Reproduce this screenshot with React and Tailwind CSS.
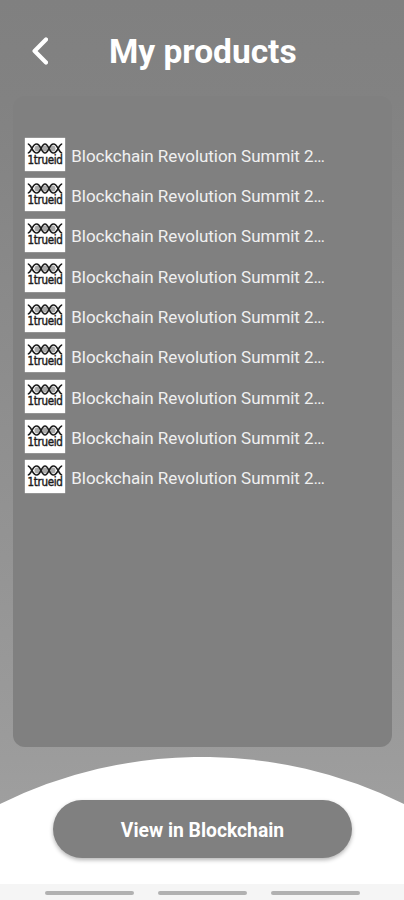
const products = Array.from({ length: 9 }, (_, i) => ({
  id: i + 1,
  title: "Blockchain Revolution Summit 2",
}));

function BackIcon() {
  return (
    <svg className="block h-7 w-4" viewBox="0 0 16 28" fill="none">
      <path
        d="M14 2.500L2.600 14L14 25.500"
        stroke="white"
        strokeWidth="4.2"
        strokeLinecap="round"
        strokeLinejoin="round"
      />
    </svg>
  );
}

function ProductLogo() {
  return (
    <div className="flex h-[33px] w-[39.5px] shrink-0 flex-col items-center bg-white pt-[4.500px] shadow-[0_0_1px_#fff]">
      <svg className="block h-[11px] w-9" viewBox="0 0 36 11" fill="none">
        <g fill="#aaa">
          <circle cx="10.5" cy="5.5" r="3" />
          <circle cx="18" cy="5.5" r="3" />
          <circle cx="25.5" cy="5.5" r="3" />
        </g>
        <g stroke="#1c1c1c" strokeWidth="1.7">
          <path d="M.8 1C4.500 1 5 10 9.600 10S14 1 18 1s3.800 9 8.400 9S31.500 1 35.200 1" />
          <path d="M.8 10C4.500 10 5 1 9.600 1S14 10 18 10s3.800-9 8.400-9S31.500 10 35.200 10" />
        </g>
      </svg>
      <span className="font-['DejaVu_Sans_Condensed','DejaVu_Sans',sans-serif] text-[11.500px] leading-[13px] tracking-[-0.300px] whitespace-nowrap text-[#1c1c1c] [-webkit-text-stroke:0.400px_#1c1c1c]">
        1trueid
      </span>
    </div>
  );
}

function ProductRow({ title }) {
  return (
    <li className="flex items-center gap-[6.500px]">
      <ProductLogo />
      <span className="pt-[2.500px] text-[17px] leading-[30px] tracking-[-0.040px] whitespace-nowrap text-[#f0f0f0]">
        {title}
        <span className="tracking-[-1px]">…</span>
      </span>
    </li>
  );
}

export default function App() {
  return (
    <div className="flex h-[900px] w-[404px] flex-col overflow-hidden bg-[linear-gradient(to_bottom,#808080_0px,#828282_100px,#9c9c9c_760px,#9f9f9f_810px)] font-['Roboto',sans-serif]">
      <header className="flex h-[96px] items-center gap-[61px] pt-[6px] pl-8">
        <button type="button" aria-label="Back">
          <BackIcon />
        </button>
        <h1 className="pt-px text-[33.500px] leading-10 font-bold text-white">
          My products
        </h1>
      </header>

      <main className="mr-[12px] ml-[13px] h-[651px] shrink-0 rounded-[12px] bg-[#808080] pt-[42px] pl-[12.300px]">
        <ul className="flex flex-col gap-[7.300px]">
          {products.map((product) => (
            <ProductRow key={product.id} title={product.title} />
          ))}
        </ul>
      </main>

      <svg
        className="mt-[10px] block h-[48px] w-[404px] shrink-0"
        viewBox="0 0 404 48"
      >
        <path d="M0 47A457 457 0 0 1 404 47V48H0Z" fill="white" />
      </svg>
      <footer className="flex flex-1 flex-col bg-white">
        <button
          type="button"
          className="mx-auto -mt-[5px] h-[58px] w-[299px] rounded-full bg-[#808080] pt-[5px] pl-px text-[19.300px] font-bold text-white shadow-[0_2px_4px_rgba(0,0,0,0.3)]"
        >
          View in Blockchain
        </button>
        <div className="mt-auto flex h-4 items-center justify-center gap-6 bg-[#f5f5f5] pt-px">
          <span className="h-1 w-[89px] rounded-full bg-[#b1b1b1]" />
          <span className="h-1 w-[89px] rounded-full bg-[#b1b1b1]" />
          <span className="h-1 w-[89px] rounded-full bg-[#b1b1b1]" />
        </div>
      </footer>
    </div>
  );
}
